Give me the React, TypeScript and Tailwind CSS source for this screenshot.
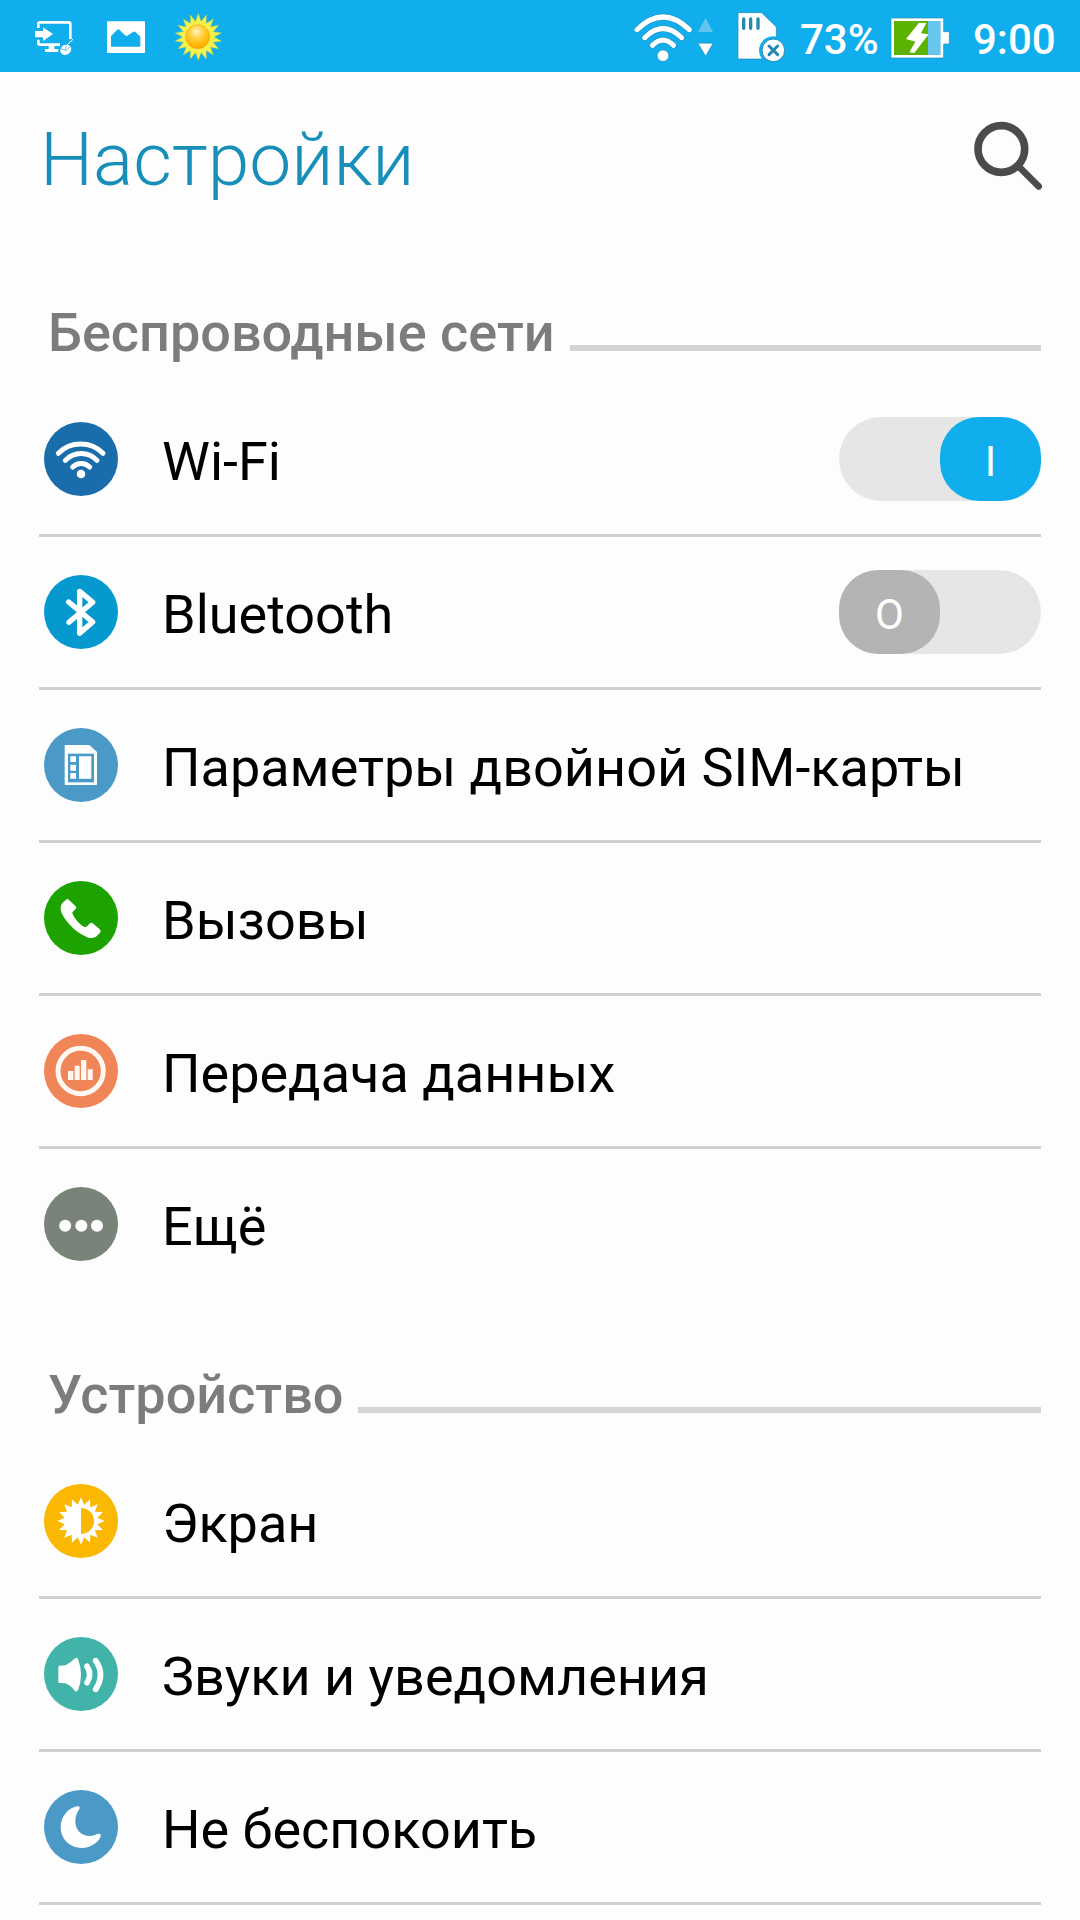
import type { ReactNode } from "react";

function sunPoints(cx: number, cy: number, outer: number, inner: number, spikes: number) {
  return Array.from({ length: spikes * 2 }, (_, i) => {
    const r = i % 2 === 0 ? outer : inner;
    const a = (Math.PI * i) / spikes - Math.PI / 2;
    return `${(cx + r * Math.cos(a)).toFixed(1)},${(cy + r * Math.sin(a)).toFixed(1)}`;
  }).join(" ");
}

function StatusBar() {
  return (
    <div className="flex h-[72px] items-start bg-[#10aeec] text-white">
      <svg className="ml-[35px] mt-5 h-9 w-10" viewBox="105 60 120 108" fill="none">
        <path d="M115 84V72q0-5 5-5h85q6 0 6 5v45" stroke="#fff" strokeWidth="8" />
        <path d="M115 119v9q0 6 6 6h59" stroke="#fff" strokeWidth="8" />
        <path d="M105 93h24V82l30 20-30 21v-11h-24z" fill="#fff" />
        <path d="M146 137h17v10h12v9h-40v-9h11z" fill="#fff" />
        <path d="M190 136q12-5 20 2 7 8 1 18-9 12-20 8-12-4-10-15 3-9 9-13z" fill="#fff" />
        <path d="M183 146l15 6 11-11M196 151l3-13" stroke="#10aeec" strokeWidth="2" />
        <path d="M203 134q2-6 7-8 6-2 8-9" stroke="#fff" strokeWidth="3" />
      </svg>
      <svg className="ml-8 mt-[21px] h-8 w-[38px]" viewBox="321 63 114 96">
        <rect x="321" y="64" width="114" height="95" rx="2" fill="#fff" />
        <path d="M333 140v-32l18-18q4-4 8 0l16 16q5 4 9 0l15-10q4-3 8 1l14 13v30z" fill="#10aeec" />
      </svg>
      <svg className="ml-[30px] mt-[13px] h-12 w-[47px]" viewBox="525 39 141 144">
        <defs>
          <radialGradient id="sunCore" cx="0.45" cy="0.3" r="0.75">
            <stop offset="0" stopColor="#fff3c4" />
            <stop offset="0.4" stopColor="#ffcf3a" />
            <stop offset="0.8" stopColor="#ffb400" />
            <stop offset="1" stopColor="#f39a00" />
          </radialGradient>
        </defs>
        <polygon points={sunPoints(595, 111, 70, 47, 18)} fill="#f6f14a" stroke="#b9d95c" strokeWidth="1.5" />
        <circle cx="593" cy="110" r="36" fill="url(#sunCore)" stroke="#f0a818" strokeWidth="2" />
      </svg>

      <svg className="ml-[412px] mt-3 h-[51px] w-20" viewBox="42 36 240 153" fill="none">
        <g stroke="#2388b4" strokeWidth="18" strokeLinecap="round">
          <path d="M51 89Q129 13 208 89" />
          <path d="M74 113Q129 58 185 113" />
          <path d="M97 136Q129 105 161 136" />
        </g>
        <g stroke="#fff" strokeWidth="15" strokeLinecap="round">
          <path d="M51 89Q129 13 208 89" />
          <path d="M74 113Q129 58 185 113" />
          <path d="M97 136Q129 105 161 136" />
        </g>
        <circle cx="129" cy="167" r="17" fill="#fff" stroke="#2388b4" strokeWidth="1.5" />
        <path d="M257 54l22 42h-45z" fill="#62c4ee" />
        <path d="M234 130h45l-22 38z" fill="#fff" stroke="#2388b4" strokeWidth="1.5" />
      </svg>
      <svg className="ml-[23px] mt-3 h-[51px] w-[49px]" viewBox="351 36 147 153">
        <path d="M354 42q0-4 4-4h67l44 43v96H357q-3 0-3-3z" fill="#fff" stroke="#2388b4" strokeWidth="2" />
        <path d="M371 57v28M392 57v28M414 57v28" stroke="#2388b4" strokeWidth="10" strokeLinecap="round" />
        <path d="M417 151a43 43 0 0 1 54-41v68h-45q-9-12-9-27z" fill="#10aeec" />
        <circle cx="460" cy="151" r="34" fill="#fff" stroke="#2388b4" strokeWidth="3" />
        <path d="M447 138l26 26M473 138l-26 26" stroke="#2388b4" strokeWidth="9" strokeLinecap="round" />
      </svg>
      <span className="ml-3.5 mt-[15px] w-[78px] whitespace-nowrap text-[42px] font-medium leading-[50px]">73%</span>
      <svg className="ml-3 mt-[17px] h-[42px] w-[60px]" viewBox="810 51 180 126">
        <path d="M813 54h158v41h17v37h-17v42H813z" fill="#fff" stroke="#2388b4" strokeWidth="2" />
        <rect x="822" y="63" width="102" height="102" fill="#5cb200" />
        <rect x="924" y="63" width="38" height="102" fill="#67c5ee" />
        <path d="M897 68l22 1-16 31 23 3-43 56-15-2 18-32-28-8z" fill="#fff" />
      </svg>
      <span className="ml-[23px] mt-[15px] whitespace-nowrap text-[42px] font-medium leading-[50px]">9:00</span>
    </div>
  );
}

function TitleBar() {
  return (
    <header className="flex h-[165px] items-start justify-between pl-10 pr-[37px]">
      <h1 className="mt-[42px] text-[75px] font-light leading-[90px] text-[#188fb9]">Настройки</h1>
      <svg className="mt-12 h-[72px] w-[70px]" viewBox="99 60 210 216" fill="none" stroke="#4b4b4b">
        <circle cx="184" cy="147" r="70" strokeWidth="23" />
        <path d="M235 198l61 61" strokeWidth="20" strokeLinecap="round" />
      </svg>
    </header>
  );
}

function SectionHeader({ title }: { title: string }) {
  return (
    <div className="flex h-[147px] items-baseline gap-[15px] pl-12 pr-[39px] pt-[69px]">
      <h2 className="whitespace-nowrap text-[54px] font-medium leading-[54px] text-[#7c7c7c]">{title}</h2>
      <div className="h-1.5 flex-1 bg-[#d4d4d4]" />
    </div>
  );
}

function Toggle({ on }: { on: boolean }) {
  return (
    <div className={`flex h-[84px] w-[202px] rounded-[42px] bg-[#e6e6e6] ${on ? "justify-end" : "justify-start"}`}>
      <div
        className={`flex h-[84px] w-[101px] items-center justify-center rounded-[39px] pt-1.5 text-[42px] leading-[42px] text-white ${
          on ? "bg-[#10aeec]" : "bg-[#b4b4b4]"
        }`}
      >
        {on ? "I" : "O"}
      </div>
    </div>
  );
}

type Item = { label: string; color: string; icon: ReactNode; toggle?: boolean };

function Row({ item, divider }: { item: Item; divider: boolean }) {
  return (
    <li className={`mx-[39px] flex items-center pl-[5px] ${divider ? "h-[153px] border-b-[3px] border-[#d0d0d0]" : "h-[150px]"}`}>
      <svg className="h-[74px] w-[74px] shrink-0" viewBox="0 0 222 222" fill="none">
        <circle cx="111" cy="111" r="111" fill={item.color} />
        {item.icon}
      </svg>
      <span className="ml-11 flex-1 whitespace-nowrap pt-[5px] text-[54px] leading-[64px] text-black">{item.label}</span>
      {item.toggle !== undefined && <Toggle on={item.toggle} />}
    </li>
  );
}

const wireless: Item[] = [
  {
    label: "Wi-Fi",
    color: "#1a6dab",
    toggle: true,
    icon: (
      <>
        <g stroke="#fff" strokeWidth="15" strokeLinecap="round">
          <path d="M43 94A95 95 0 0 1 177 94" />
          <path d="M64 115A65 65 0 0 1 159 115" />
          <path d="M86 135A36 36 0 0 1 137 135" />
        </g>
        <circle cx="111" cy="156" r="13" fill="#fff" />
      </>
    ),
  },
  {
    label: "Bluetooth",
    color: "#0599cf",
    toggle: false,
    icon: (
      <path
        d="M74 81L146 141 107 175V49L146 82 75 142"
        stroke="#fff"
        strokeWidth="16"
        strokeLinecap="round"
        strokeLinejoin="round"
      />
    ),
  },
  {
    label: "Параметры двойной SIM-карты",
    color: "#4a99c7",
    icon: (
      <>
        <path d="M64 51H136L159 72V169q0 2-2 2H64q-2 0-2-2V53q0-2 2-2z" fill="#fff" />
        <rect x="72" y="77" width="78" height="86" fill="#4a99c7" />
        <path d="M79 85h17v17H79zM79 110h17v18H79zM79 135h17v17H79zM105 85h37v67H105z" fill="#fff" />
      </>
    ),
  },
  {
    label: "Вызовы",
    color: "#1ca300",
    icon: (
      <path
        d="M66 56Q71 52 75 57L95 76Q99 80 95 84L85 94Q84 98 92 110 105 130 122 138 126 139 129 136L138 127Q143 123 148 128L167 145Q173 150 168 155L158 166Q148 174 133 170 100 158 76 130 53 104 50 86 49 73 55 66z"
        fill="#fff"
      />
    ),
  },
  {
    label: "Передача данных",
    color: "#f08558",
    icon: (
      <>
        <circle cx="110" cy="111" r="68" stroke="#fff8f2" strokeWidth="15" />
        <path d="M72 111h16v27H72zM92 95h15v43H92zM111 78h16v60h-16zM131 106h15v32h-15z" fill="#fff8f2" />
      </>
    ),
  },
  {
    label: "Ещё",
    color: "#798379",
    icon: (
      <g fill="#fff">
        <circle cx="63.500" cy="116" r="18" />
        <circle cx="112" cy="116" r="18" />
        <circle cx="159" cy="116" r="18" />
      </g>
    ),
  },
];

const device: Item[] = [
  {
    label: "Экран",
    color: "#fab802",
    icon: (
      <>
        <polygon points={sunPoints(111, 111, 71, 50, 16)} fill="#fff" />
        <path d="M111 72A39 39 0 0 1 111 150z" fill="#fab802" />
      </>
    ),
  },
  {
    label: "Звуки и уведомления",
    color: "#42b3a9",
    icon: (
      <>
        <path
          d="M47 86L64 85Q80 78 93 64 99 60 102 66 111 90 111 113 111 138 102 160 98 166 92 161 80 145 64 139L47 138Q43 138 43 134V90Q43 86 47 86z"
          fill="#fff"
        />
        <path d="M129 88Q145 112 129 137" stroke="#fff" strokeWidth="17" strokeLinecap="round" />
        <path d="M155 71Q184 113 155 157" stroke="#fff" strokeWidth="17" strokeLinecap="round" />
      </>
    ),
  },
  {
    label: "Не беспокоить",
    color: "#4a99c7",
    icon: (
      <path
        d="M99 49Q110 47 106 58C82 90 95 138 137 138 150 138 158 130 166 131Q172 132 170 139C165 157 140 174 114 174 78 174 50 148 50 112 50 80 72 54 99 49z"
        fill="#fff"
      />
    ),
  },
];

export default function App() {
  return (
    <div className="h-[1920px] w-[1080px] overflow-hidden bg-[#fdfdfd] font-['Roboto',sans-serif]">
      <StatusBar />
      <TitleBar />
      <SectionHeader title="Беспроводные сети" />
      <ul>
        {wireless.map((item, i) => (
          <Row key={item.label} item={item} divider={i < wireless.length - 1} />
        ))}
      </ul>
      <SectionHeader title="Устройство" />
      <ul>
        {device.map((item) => (
          <Row key={item.label} item={item} divider />
        ))}
      </ul>
    </div>
  );
}
